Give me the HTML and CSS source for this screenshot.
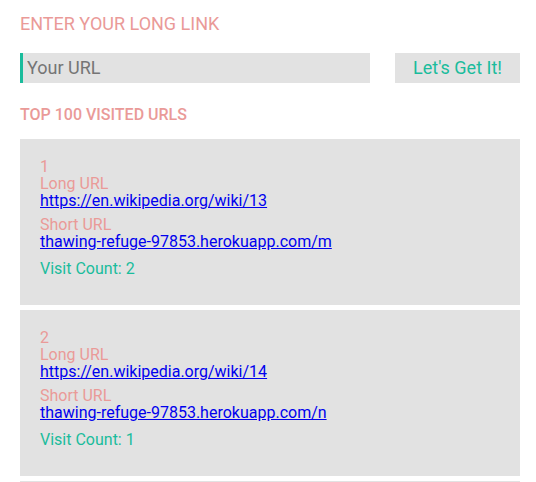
FILE: index.html
```html
<!DOCTYPE html>
<html>
<head>
<meta charset="utf-8">
<link rel="stylesheet" href="styles.css">
</head>
<body>
<div class="page">
  <h1 class="title">ENTER YOUR LONG LINK</h1>
  <form class="shorten">
    <input class="url-input" type="text" placeholder="Your URL">
    <button class="go" type="button">Let's Get It!</button>
  </form>
  <h2 class="subtitle">TOP 100 VISITED URLS</h2>
  <div class="list">
    <div class="card">
      <div class="rank">1</div>
      <div class="label">Long URL</div>
      <a class="link" href="#">https://en.wikipedia.org/wiki/13</a>
      <div class="label gap">Short URL</div>
      <a class="link" href="#">thawing-refuge-97853.herokuapp.com/m</a>
      <div class="count">Visit Count: 2</div>
    </div>
    <div class="card">
      <div class="rank">2</div>
      <div class="label">Long URL</div>
      <a class="link" href="#">https://en.wikipedia.org/wiki/14</a>
      <div class="label gap">Short URL</div>
      <a class="link" href="#">thawing-refuge-97853.herokuapp.com/n</a>
      <div class="count">Visit Count: 1</div>
    </div>
    <div class="card">
      <div class="rank">3</div>
      <div class="label">Long URL</div>
      <a class="link" href="#">https://en.wikipedia.org/wiki/15</a>
      <div class="label gap">Short URL</div>
      <a class="link" href="#">thawing-refuge-97853.herokuapp.com/o</a>
      <div class="count">Visit Count: 1</div>
    </div>
  </div>
</div>
</body>
</html>
```

FILE: styles.css
```css
html, body {
  margin: 0;
  padding: 0;
  background: #ffffff;
  font-family: Roboto, "Liberation Sans", sans-serif;
}
.page {
  width: 500px;
  padding: 14px 20px 0 20px;
}
.title {
  margin: 0;
  font-size: 18px;
  line-height: 20px;
  font-weight: 400;
  color: #ea9a98;
}
.shorten {
  margin: 19px 0 0 0;
  display: flex;
  gap: 25px;
}
.url-input {
  box-sizing: border-box;
  width: 350px;
  height: 30px;
  margin: 0;
  border: none;
  border-left: 3px solid #1abc9c;
  background: #e2e2e2;
  padding: 0 0 0 4px;
  font-family: Roboto, "Liberation Sans", sans-serif;
  font-size: 18px;
  line-height: 30px;
  color: #333;
  outline: none;
}
.url-input::placeholder {
  color: #757575;
}
.go {
  box-sizing: border-box;
  width: 125px;
  height: 30px;
  margin: 0;
  border: none;
  background: #e2e2e2;
  color: #1abc9c;
  font-family: Roboto, "Liberation Sans", sans-serif;
  font-size: 18px;
  line-height: 30px;
  padding: 0;
}
.subtitle {
  margin: 22px 0 0 0;
  font-size: 16px;
  line-height: 20px;
  font-weight: 500;
  color: #ea9a98;
}
.list {
  margin-top: 14px;
  display: flex;
  flex-direction: column;
  gap: 5px;
}
.card {
  box-sizing: border-box;
  height: 166px;
  background: #e2e2e2;
  padding: 19px 20px 0 20px;
  display: flex;
  flex-direction: column;
  align-items: flex-start;
  font-size: 16px;
  line-height: 17px;
}
.rank, .label {
  color: #ea9a98;
}
.label.gap {
  margin-top: 7px;
}
.link {
  color: #0000ee;
  text-decoration: underline;
}
.count {
  margin-top: 10px;
  color: #1abc9c;
}
```
